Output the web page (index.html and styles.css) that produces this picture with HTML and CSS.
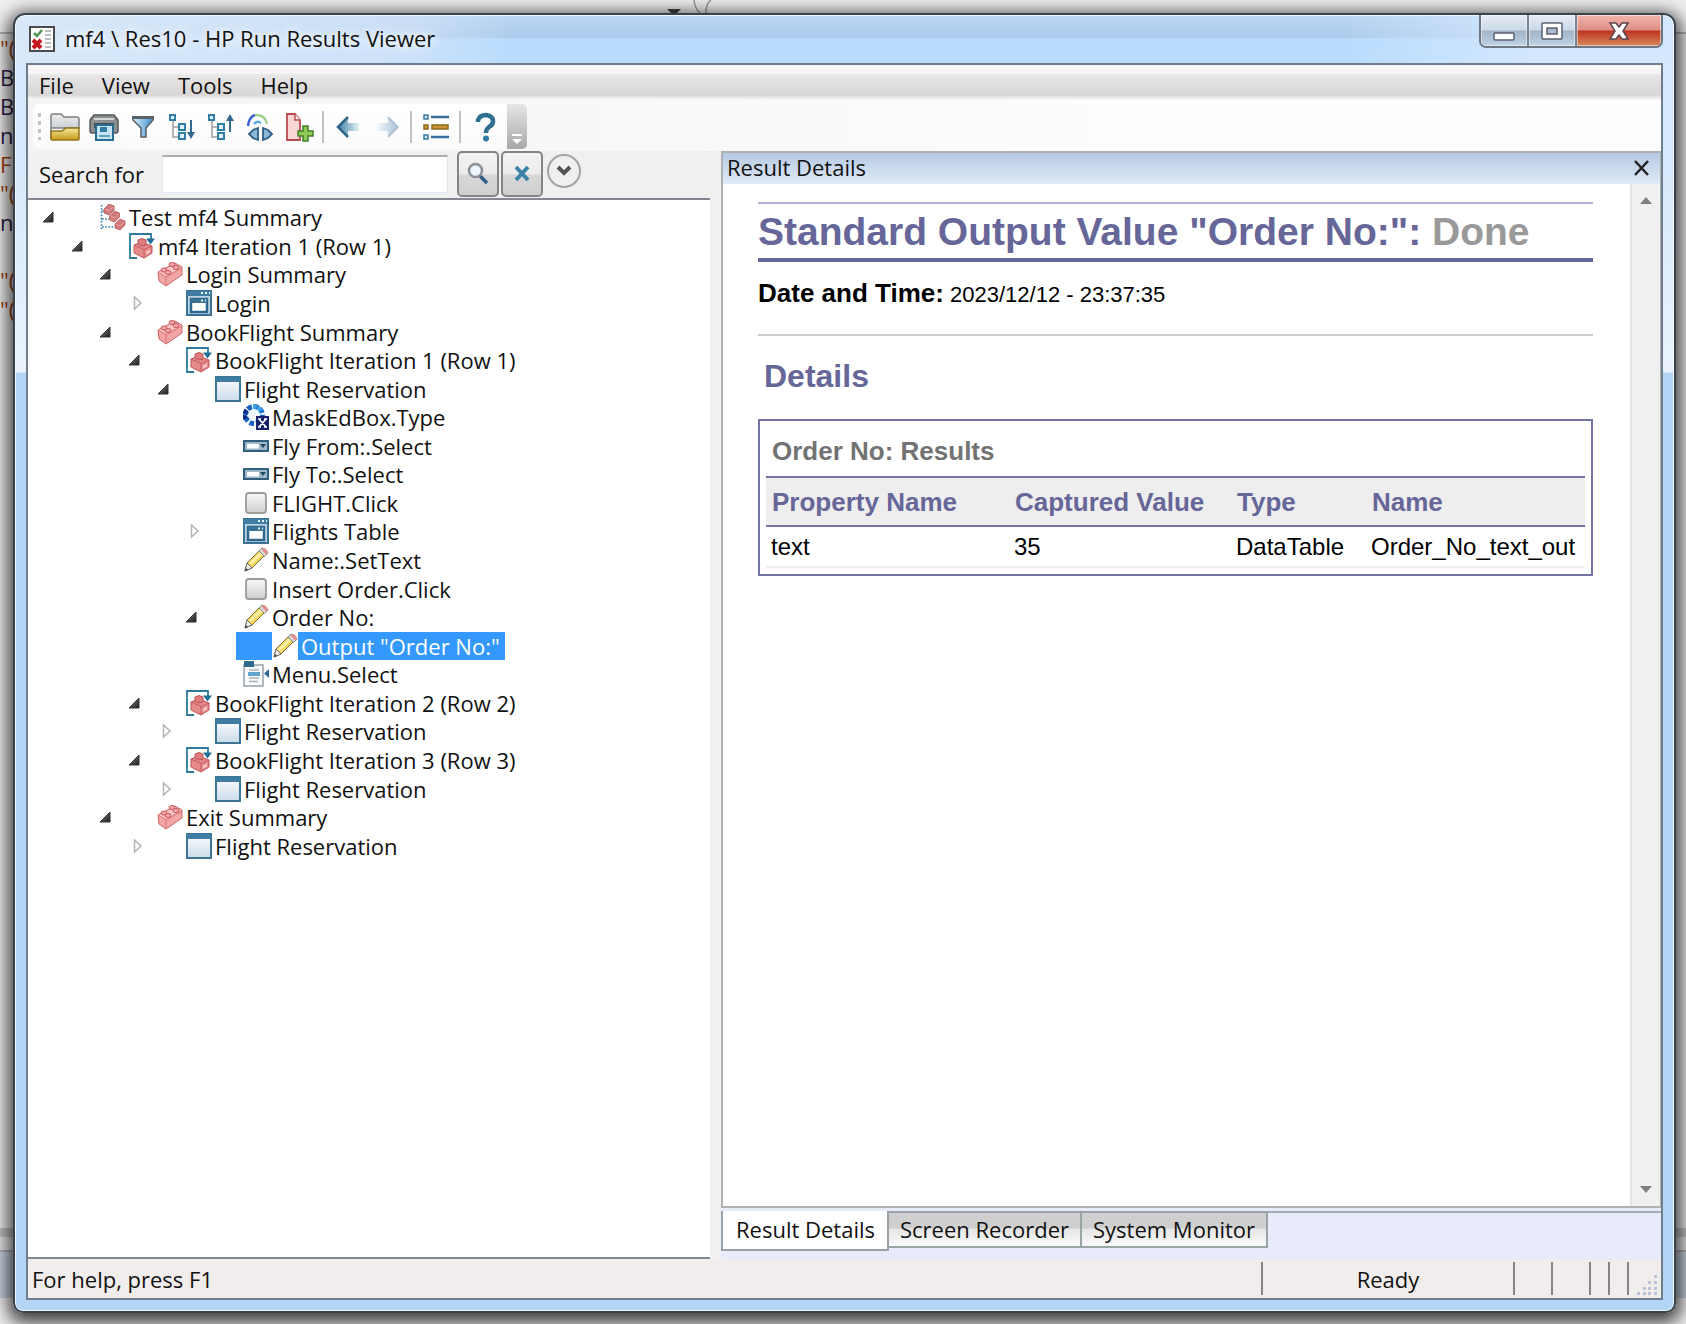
FILE: index.html
```html
<!DOCTYPE html>
<html lang="en">
<head>
<meta charset="utf-8">
<title>mf4 \ Res10 - HP Run Results Viewer</title>
<link rel="stylesheet" href="styles.css">
</head>
<body>
<svg class="defs" aria-hidden="true">
  <defs>
    <linearGradient id="g-win" x1="0" y1="0" x2="0" y2="1"><stop offset="0" stop-color="#fff"/><stop offset="1" stop-color="#c9dbe9"/></linearGradient>
    <linearGradient id="g-btn" x1="0" y1="0" x2="0" y2="1"><stop offset="0" stop-color="#f8f8f8"/><stop offset="1" stop-color="#cfcfcf"/></linearGradient>
    <linearGradient id="g-gold" x1="0" y1="0" x2="0" y2="1"><stop offset="0" stop-color="#f3e79a"/><stop offset="1" stop-color="#c79a17"/></linearGradient>
    <linearGradient id="g-paper" x1="0" y1="0" x2="0" y2="1"><stop offset="0" stop-color="#eceeef"/><stop offset="1" stop-color="#b4b8bb"/></linearGradient>
    <linearGradient id="g-back" x1="0" y1="0" x2="1" y2="0"><stop offset="0" stop-color="#3f82a8"/><stop offset="1" stop-color="#e4f0f6"/></linearGradient>
    <linearGradient id="g-fwd" x1="0" y1="0" x2="1" y2="0"><stop offset="0" stop-color="#f3f7fa"/><stop offset="1" stop-color="#a9c2d8"/></linearGradient>
    <linearGradient id="g-fun" x1="0" y1="0" x2="1" y2="0"><stop offset="0" stop-color="#d6efff"/><stop offset="1" stop-color="#3f8fce"/></linearGradient>
    <linearGradient id="g-arr" x1="0" y1="0" x2="1" y2="1"><stop offset="0" stop-color="#8a8a8a"/><stop offset="1" stop-color="#1c1c1c"/></linearGradient>
  </defs>
  <symbol id="open" viewBox="0 0 12 12"><path d="M11 1v10H1z" fill="url(#g-arr)" stroke="#333"/></symbol>
  <symbol id="closed" viewBox="0 0 12 16"><path d="M4.500 2v12l6.500-6z" fill="#fff" stroke="#b4b4b4" stroke-width="1.500"/></symbol>
  <symbol id="test" viewBox="0 0 26 26">
    <path d="M1.500 1v25M2 7h5M2 15h7M2 23h11" fill="none" stroke="#2f7fa8" stroke-width="1.600" stroke-dasharray="1.600 1.600"/>
    <g fill="#d17a7a" stroke="#b65a5e" stroke-width=".8"><path d="M4 5l5-5 5 2v4l-5 5-5-2z"/><path d="M9.500 12l5-5 5 2v4l-5 5-5-2z"/><path d="M15 20l5-5 5 2v4l-5 5-5-2z"/></g>
    <path d="M5 5l4 2 4-4M10.500 12l4 2 4-4M16 20l4 2 4-4" fill="none" stroke="#eba3a3"/>
  </symbol>
  <symbol id="brick" viewBox="0 0 26 26">
    <path d="M1 11L18 2l7 4v8L9 25l-7-5z" fill="#f3a6a6" stroke="#cf6467"/>
    <path d="M1 11l8 5 16-9M9 16v8" fill="none" stroke="#d97679"/>
    <path d="M2 11L18 3l6 3L9 15z" fill="#f9c4c4"/>
    <g fill="#f3a9a9" stroke="#c9585c"><ellipse cx="7" cy="9" rx="3" ry="2"/><ellipse cx="15" cy="3.500" rx="3" ry="2"/><ellipse cx="19" cy="6.500" rx="3" ry="2"/><ellipse cx="11" cy="11.500" rx="3" ry="2"/></g>
  </symbol>
  <symbol id="iter" viewBox="0 0 26 26">
    <path d="M8 25H1V1h21v6" fill="none" stroke="#2e7a9e" stroke-width="1.800"/>
    <path d="M5 12l8-3 10 4v7l-8 5-10-5z" fill="#e58a8a" stroke="#bf5458"/>
    <path d="M5 12l10 4.500 8-3.500M15 16.500V25" fill="none" stroke="#c65c60"/>
    <path d="M9 11V7q4-3 8 0v5q-4 2.500-8-1z" fill="#dd7b7d" stroke="#bf5458"/>
    <path d="M17 18.500l4-2v3l-4 2z" fill="#f7c6c6"/>
    <path d="M17 5.500h9l-4.500 6z" fill="#1f6f96"/>
  </symbol>
  <symbol id="win" viewBox="0 0 26 26"><path d="M1 1h24v24H1z" fill="url(#g-win)" stroke="#3e7596" stroke-width="2"/><path d="M1 1h24v5H1z" fill="#3f7ea2"/></symbol>
  <symbol id="win2" viewBox="0 0 26 26">
    <path d="M1 1h24v24H1z" fill="#bcd3e2" stroke="#3a7296" stroke-width="2"/><path d="M1 1h24v5H1z" fill="#3f7ea2"/>
    <path d="M15 3h2M19 3h2M23 3h1" stroke="#e8f3fa" stroke-width="2"/>
    <path d="M5 9h16v13H5z" fill="#fff" stroke="#2f688e" stroke-width="2.500"/><path d="M5 9h16v4H5z" fill="#3a7296"/><path d="M15 10.500h2M19 10.500h1" stroke="#e8f3fa" stroke-width="2"/>
  </symbol>
  <symbol id="mask" viewBox="0 0 26 26">
    <circle cx="11" cy="11" r="8.500" fill="#f1f8fe" stroke="#1a63c4" stroke-width="5" stroke-dasharray="4.600 2"/>
    <path d="M2.500 15A9 9 0 015 4.500" fill="none" stroke="#122c86" stroke-width="4.500" stroke-dasharray="4 1.500"/>
    <path d="M10 2.500A9 9 0 0119 9" fill="none" stroke="#37a4ea" stroke-width="4.500" stroke-dasharray="4 1.500"/>
    <path d="M13 12h13v14H13z" fill="#17226b"/><path d="M16 15l7 8M23 15l-7 8M15 15h3M21 15h3M15 23h3M21 23h3" stroke="#fff" stroke-width="1.700"/>
  </symbol>
  <symbol id="combo" viewBox="0 0 26 26"><path d="M1 8h24v10H1z" fill="#9fb8c6" stroke="#2e5f7c" stroke-width="2"/><path d="M4 11h12v4.500H4z" fill="#fff"/><path d="M17 11h6l-3 4z" fill="#1d4a66"/></symbol>
  <symbol id="btn" viewBox="0 0 26 26"><rect x="3" y="3" width="20" height="20" rx="3" fill="url(#g-btn)" stroke="#9b9b9b" stroke-width="1.800"/></symbol>
  <symbol id="pencil" viewBox="0 0 26 26">
    <path d="M2 24l2-8L17 3l5 5L9 21z" fill="#f5d75c" stroke="#7a6a3c"/>
    <path d="M7 17L19 5.500" stroke="#fdf2b0" stroke-width="2.500"/>
    <path d="M2 24l2-8 5 5z" fill="#f2eee6" stroke="#6d6d6d"/><path d="M2 24l1-3 2 2z" fill="#444"/>
    <path d="M16 4l3-3q4 0 6 5l-3.500 3.500z" fill="#d8d8d8" stroke="#8a8a8a"/><path d="M18.500 2.500q4-3 6.500 3l-2 2z" fill="#e88f90"/>
  </symbol>
  <symbol id="menu" viewBox="0 0 26 26">
    <path d="M1 4h19v21H1z" fill="#fafafa" stroke="#97a1ad" stroke-width="1.500"/><path d="M1 0h10v6H1z" fill="#2f6b8f"/>
    <path d="M6 9h10M6 17h10M6 20.500h9" stroke="#aab4bd" stroke-width="1.500"/><path d="M5 13h12" stroke="#5fa4cc" stroke-width="4"/><path d="M26 8v9l-5-4.500z" fill="#2d6a9a"/>
  </symbol>
</svg>

<div class="desktop" aria-hidden="true">
  <div class="behind-top"><svg width="60" height="14" viewBox="0 0 60 14"><path d="M0 9h14l-5 5H5z" fill="#444"/><path d="M27 0q1 9 6 13M44 0q-5 3-5 13" fill="none" stroke="#999" stroke-width="1.500"/></svg></div>
  <pre class="code"><b>"(</b>
Be
Be
n
<b>F</b>
<b>"(</b>
n

<b>"(</b>
<b>"(</b></pre>
  <div class="behind-bottom"></div>
</div>

<div class="window">
  <header class="titlebar">
    <svg class="app-icon" viewBox="0 0 26 26"><path d="M1 1h24v24H1z" fill="#fdfdfd" stroke="#4b4b4b" stroke-width="2"/><path d="M5 7l3 3 5-6" fill="none" stroke="#4f9650" stroke-width="2.500"/><path d="M4 14l8 8M12 14l-8 8" stroke="#c4161d" stroke-width="4"/><path d="M16 5h6M16 9h6M16 13h6M16 17h6M16 21h6" stroke="#a9a9a9" stroke-width="1.500"/></svg>
    <h1 class="title">mf4 \ Res10 - HP Run Results Viewer</h1>
    <div class="controls">
      <button class="ctl" aria-label="Minimize"><svg width="22" height="22" viewBox="0 0 22 22"><rect x="1" y="13" width="20" height="7" rx="1" fill="#fff" stroke="#5b5f70" stroke-width="1.500"/></svg></button>
      <button class="ctl" aria-label="Maximize"><svg width="22" height="20" viewBox="0 0 22 20"><rect x="1" y="2" width="20" height="16" rx="1" fill="#fff" stroke="#5b5f70" stroke-width="1.500"/><rect x="6" y="7" width="10" height="6" fill="#a9bdd2" stroke="#5b5f70" stroke-width="1.500"/></svg></button>
      <button class="ctl close" aria-label="Close"><svg width="22" height="20" viewBox="0 0 22 20"><path d="M2 2h6l3 4 3-4h6l-5 8 5 8h-6l-3-4-3 4H2l5-8z" fill="#fff" stroke="#5a4552" stroke-width="1.500"/></svg></button>
    </div>
  </header>

  <div class="client">
    <nav class="menubar"><button>File</button><button>View</button><button>Tools</button><button>Help</button></nav>

    <div class="toolbar-row">
      <div class="toolbar" role="toolbar">
        <span class="grip"></span>
        <button aria-label="Open"><svg viewBox="0 0 30 30"><path d="M1 27V4q0-2 2-2h8l3 3h13q2 0 2 2v9H1z" fill="url(#g-paper)" stroke="#7d8082" stroke-width="1.500"/><path d="M1 27V19h11l4-3h13v11q0 1-1 1H2q-1 0-1-1z" fill="url(#g-gold)" stroke="#93741a" stroke-width="1.500"/></svg></button>
        <button aria-label="Print"><svg viewBox="0 0 30 30"><path d="M5 3h20l4 5v11q0 2-2 2H3q-2 0-2-2V8z" fill="#8d9093" stroke="#55585a" stroke-width="1.500"/><path d="M5 7h20" stroke="#d5d7d8" stroke-width="2"/><path d="M5 11h20v5H5z" fill="#45494c"/><path d="M7 13h17v15H7z" fill="#c6e4f3" stroke="#296b90" stroke-width="2"/><path d="M11 15h7v5h-7z" fill="#2f7ca6"/><path d="M10 24h11" stroke="#5ea1c3" stroke-width="2"/></svg></button>
        <button aria-label="Filter"><svg viewBox="0 0 30 30"><path d="M5 5h20v3l-7 8v9h-5v-9L5 8z" fill="url(#g-fun)" stroke="#555c62" stroke-width="1.500"/><path d="M4 4h22v3H4z" fill="#5c6165"/></svg></button>
        <button aria-label="Expand all"><svg viewBox="0 0 30 30"><path d="M6 8v17h6M6 15h6" fill="none" stroke="#9d9d9d" stroke-width="1.500"/><path d="M3 3h5v5H3zM12 12h6v6h-6zM12 21h6v6h-6z" fill="#e3f2fa" stroke="#2f7fa8" stroke-width="2"/><path d="M24 8v17" stroke="#326a94" stroke-width="2"/><path d="M20 20h8l-4 7z" fill="#326a94"/></svg></button>
        <button aria-label="Collapse all"><svg viewBox="0 0 30 30"><path d="M6 8v17h6M6 15h6" fill="none" stroke="#9d9d9d" stroke-width="1.500"/><path d="M3 3h5v5H3zM12 12h6v6h-6zM12 21h6v6h-6z" fill="#e3f2fa" stroke="#2f7fa8" stroke-width="2"/><path d="M24 4v16" stroke="#326a94" stroke-width="2"/><path d="M20 9h8l-4-7z" fill="#326a94"/></svg></button>
        <button aria-label="Find"><svg viewBox="0 0 30 30"><path d="M3 14Q4 5 10 3" fill="none" stroke="#3c63d8" stroke-width="2.500"/><path d="M10 3q10-1 12 9" fill="none" stroke="#9ed28a" stroke-width="2.500"/><path d="M9 12q3-4 7-1" fill="none" stroke="#58a8e8" stroke-width="2.500"/><path d="M13 16v12l-5-2-4-4 4-4zM18 16v12l5-2 4-4-4-4z" fill="#8db9d8" stroke="#2c5f86" stroke-width="1.800"/></svg></button>
        <button aria-label="Add report"><svg viewBox="0 0 30 30"><path d="M3 2h8l5 6v20H3z" fill="#f8d6d6" stroke="#bb4a4e" stroke-width="1.800"/><path d="M11 2v6h5" fill="#fff" stroke="#bb4a4e" stroke-width="1.500"/><path d="M19 14h5v5h5v5h-5v5h-5v-5h-5v-5h5z" fill="#8fcb52" stroke="#3f7d28" stroke-width="1.500"/></svg></button>
        <span class="sep"></span>
        <button aria-label="Back"><svg viewBox="0 0 30 30"><path d="M5 15L15 5v6h11v8H15v6z" fill="url(#g-back)"/><path d="M15 5L5 15l10 10" fill="none" stroke="#2f668a" stroke-width="2.500"/></svg></button>
        <button aria-label="Forward"><svg viewBox="0 0 30 30"><path d="M26 15L16 5v6H5v8h11v6z" fill="url(#g-fwd)"/><path d="M16 5l10 10-10 10" fill="none" stroke="#a9bccf" stroke-width="1.500"/></svg></button>
        <span class="sep"></span>
        <button aria-label="List"><svg viewBox="0 0 30 30"><path d="M3 3h4v4H3zM3 23h4v4H3z" fill="#cfe4f0" stroke="#3b7ba4" stroke-width="1.500"/><path d="M10 5h18M10 25h18" stroke="#366f9a" stroke-width="2.500"/><path d="M3 13h4v4H3zM11 13h16v4H11z" fill="#c99a35" stroke="#8d6718" stroke-width="1.500"/></svg></button>
        <span class="sep"></span>
        <button aria-label="Help"><svg viewBox="0 0 30 30"><path d="M8 10V8q2-5 8-5 7 1 7 6 0 4-4 6-3 2-3 6" fill="none" stroke="#2e6f92" stroke-width="4.500"/><circle cx="16" cy="26.500" r="3" fill="#2e7ca3"/></svg></button>
      </div>
      <button class="overflow" aria-label="Toolbar options"><svg width="12" height="12" viewBox="0 0 12 12"><path d="M1 2h10" stroke="#fff" stroke-width="2"/><path d="M1 6h10l-5 5z" fill="#fff"/></svg></button>
    </div>

    <main class="panes">
      <section class="left">
        <form class="search">
          <label for="q">Search for</label>
          <input id="q" type="text">
          <button type="button" class="sbtn" aria-label="Search"><svg width="24" height="24" viewBox="0 0 24 24"><path d="M14 14l7 7" stroke="#2f5c8a" stroke-width="3.500"/><circle cx="9.500" cy="8.500" r="6.500" fill="#eef6fb" stroke="#8d9195" stroke-width="2.500"/></svg></button>
          <button type="button" class="sbtn" aria-label="Clear"><svg width="24" height="24" viewBox="0 0 24 24"><path d="M6 5l12 13M18 5L6 18" stroke="#3a83a6" stroke-width="4"/></svg></button>
          <button type="button" class="round" aria-label="Search options"><svg width="16" height="12" viewBox="0 0 16 12"><path d="M2 2l6 6 6-6" fill="none" stroke="#555" stroke-width="4"/></svg></button>
        </form>
        <ul class="tree" role="tree">
          <li class="l1"><svg class="ar"><use href="#open"/></svg><span class="node"><svg><use href="#test"/></svg>Test mf4 Summary</span></li>
          <li class="l2"><svg class="ar"><use href="#open"/></svg><span class="node"><svg><use href="#iter"/></svg>mf4 Iteration 1 (Row 1)</span></li>
          <li class="l3"><svg class="ar"><use href="#open"/></svg><span class="node"><svg><use href="#brick"/></svg>Login Summary</span></li>
          <li class="l4"><svg class="ar cl"><use href="#closed"/></svg><span class="node"><svg><use href="#win2"/></svg>Login</span></li>
          <li class="l3"><svg class="ar"><use href="#open"/></svg><span class="node"><svg><use href="#brick"/></svg>BookFlight Summary</span></li>
          <li class="l4"><svg class="ar"><use href="#open"/></svg><span class="node"><svg><use href="#iter"/></svg>BookFlight Iteration 1 (Row 1)</span></li>
          <li class="l5"><svg class="ar"><use href="#open"/></svg><span class="node"><svg><use href="#win"/></svg>Flight Reservation</span></li>
          <li class="l6"><svg class="ar"></svg><span class="node"><svg><use href="#mask"/></svg>MaskEdBox.Type</span></li>
          <li class="l6"><svg class="ar"></svg><span class="node"><svg><use href="#combo"/></svg>Fly From:.Select</span></li>
          <li class="l6"><svg class="ar"></svg><span class="node"><svg><use href="#combo"/></svg>Fly To:.Select</span></li>
          <li class="l6"><svg class="ar"></svg><span class="node"><svg><use href="#btn"/></svg>FLIGHT.Click</span></li>
          <li class="l6"><svg class="ar cl"><use href="#closed"/></svg><span class="node"><svg><use href="#win2"/></svg>Flights Table</span></li>
          <li class="l6"><svg class="ar"></svg><span class="node"><svg><use href="#pencil"/></svg>Name:.SetText</span></li>
          <li class="l6"><svg class="ar"></svg><span class="node"><svg><use href="#btn"/></svg>Insert Order.Click</span></li>
          <li class="l6"><svg class="ar"><use href="#open"/></svg><span class="node"><svg><use href="#pencil"/></svg>Order No:</span></li>
          <li class="l7"><svg class="ar"></svg><span class="node selected"><svg><use href="#pencil"/></svg>Output "Order No:"</span></li>
          <li class="l6"><svg class="ar"></svg><span class="node"><svg><use href="#menu"/></svg>Menu.Select</span></li>
          <li class="l4"><svg class="ar"><use href="#open"/></svg><span class="node"><svg><use href="#iter"/></svg>BookFlight Iteration 2 (Row 2)</span></li>
          <li class="l5"><svg class="ar cl"><use href="#closed"/></svg><span class="node"><svg><use href="#win"/></svg>Flight Reservation</span></li>
          <li class="l4"><svg class="ar"><use href="#open"/></svg><span class="node"><svg><use href="#iter"/></svg>BookFlight Iteration 3 (Row 3)</span></li>
          <li class="l5"><svg class="ar cl"><use href="#closed"/></svg><span class="node"><svg><use href="#win"/></svg>Flight Reservation</span></li>
          <li class="l3"><svg class="ar"><use href="#open"/></svg><span class="node"><svg><use href="#brick"/></svg>Exit Summary</span></li>
          <li class="l4"><svg class="ar cl"><use href="#closed"/></svg><span class="node"><svg><use href="#win"/></svg>Flight Reservation</span></li>
        </ul>
      </section>

      <section class="right">
        <div class="details">
          <div class="pane-head"><span>Result Details</span><button aria-label="Close pane"><svg width="18" height="18" viewBox="0 0 18 18"><path d="M2 2l13 14M15 2L2 16" stroke="#222" stroke-width="2.500"/></svg></button></div>
          <div class="pane-body">
            <article class="report">
              <h2>Standard Output Value "Order No:": <span>Done</span></h2>
              <p class="date"><strong>Date and Time:</strong> 2023/12/12 - 23:37:35</p>
              <h3>Details</h3>
              <div class="box">
                <table>
                  <caption>Order No: Results</caption>
                  <colgroup><col class="c1"><col class="c2"><col class="c3"><col></colgroup>
                  <thead><tr><th>Property Name</th><th>Captured Value</th><th>Type</th><th>Name</th></tr></thead>
                  <tbody><tr><td>text</td><td>35</td><td>DataTable</td><td>Order_No_text_out</td></tr></tbody>
                </table>
              </div>
            </article>
            <div class="scroll" aria-hidden="true"><svg width="14" height="8" viewBox="0 0 14 8"><path d="M1 8l6-7 6 7z" fill="#808080"/></svg><svg width="14" height="8" viewBox="0 0 14 8"><path d="M1 0l6 7 6-7z" fill="#808080"/></svg></div>
          </div>
        </div>
        <div class="tabs" role="tablist">
          <button role="tab" class="active" aria-selected="true">Result Details</button><button role="tab">Screen Recorder</button><button role="tab">System Monitor</button>
        </div>
      </section>
    </main>

    <footer class="status">
      <span class="help">For help, press F1</span><span class="cell ready">Ready</span><span class="cell wide"></span><span class="cell wide"></span><span class="cell slim"></span><span class="cell slim"></span>
      <span class="cell end"><svg width="20" height="20" viewBox="0 0 20 20"><path d="M17 0h3v3h-3zM11 6h3v3h-3zM17 6h3v3h-3zM6 12h3v3H6zM11 12h3v3h-3zM17 12h3v3h-3zM0 17h3v3H0zM6 17h3v3H6zM11 17h3v3h-3zM17 17h3v3h-3z" fill="#bcc3d6"/></svg></span>
    </footer>
  </div>
</div>
</body>
</html>
```
FILE: styles.css
```css
* { box-sizing: border-box; }

body {
  display: flex;
  min-height: 100vh;
  margin: 0;
  padding: 13px 10px 11px 13px;
  background: #e4e4e4;
  font: 22px/28px "Open Sans", "Noto Sans", sans-serif;
  color: #111;
  overflow: hidden;
}

button {
  margin: 0;
  padding: 0;
  border: 0;
  background: none;
  font: inherit;
  color: inherit;
}

svg { display: block; flex: none; }
.defs { position: absolute; width: 0; height: 0; }

/* Whatever lies behind the window */
.desktop {
  position: absolute;
  inset: 0;
  display: flex;
  flex-direction: column;
  background: #ededed;
}
.behind-top {
  flex: none;
  height: 34px;
  padding-left: 667px;
  border-bottom: 2px solid #b4b4b4;
  background: #f0f0f0;
}
.code {
  flex: 1;
  margin: 0;
  font: inherit;
  line-height: 29px;
  color: #2a1745;
}
.code b { font-weight: 400; color: #a33c0c; }
.behind-bottom {
  flex: none;
  height: 96px;
  background: linear-gradient(#c4c4c4 0 9px, #e6e6e6 9px 22px, #b0b4b8 22px 24px, #c9d2de 24px 70px, #f0f0f0 70px);
}

.window {
  position: relative;
  flex: 1;
  display: flex;
  flex-direction: column;
  min-width: 0;
  padding: 0 11px 11px;
  border: 2px solid #3a424b;
  border-radius: 12px 12px 10px 10px;
  background:
    linear-gradient(90deg, rgba(220, 234, 250, .9) 0, rgba(210, 228, 248, .7) 24%, rgba(190, 220, 250, 0) 30%, rgba(190, 220, 250, 0) 80%, rgba(214, 233, 254, .9) 92%) 0 0 / 100% 50px no-repeat,
    linear-gradient(#bad6f4, #adcbea 22px, #b8dcff 24px, #bbdcfb 50px) 0 0 / 100% 50px no-repeat,
    linear-gradient(#d6e8fc 0 140px, #eaf3fc 357px, #b4d6f6 358px);
  box-shadow: inset 0 0 0 1px #f0f7ff, 0 5px 18px 5px rgba(0, 0, 0, .75);
}

.titlebar {
  display: flex;
  flex: none;
  height: 48px;
  padding-left: 3px;
}
.app-icon { width: 26px; height: 26px; margin-top: 11px; }
.title {
  flex: 1;
  margin: 8px 0 0 10px;
  font-size: 22px;
  font-weight: 400;
  line-height: 30px;
  text-shadow: 0 0 8px #fff, 0 0 12px #fff;
}
.controls {
  display: flex;
  height: 33px;
  border: solid #6d7884;
  border-width: 0 2px 2px;
  border-radius: 0 0 7px 7px;
  overflow: hidden;
}
.ctl {
  display: grid;
  place-items: center;
  width: 48px;
  border-right: 2px solid #76828f;
  background: linear-gradient(#e6eef7, #cbd8e6 15px, #a2b4c7 16px, #c0d3e6);
  box-shadow: inset 0 0 0 1px rgba(255, 255, 255, .5);
}
.ctl.close {
  width: 84px;
  border-right: 0;
  background: linear-gradient(#f2b5aa, #dd8e84 15px, #bd3420 16px, #d98a5c);
}

.client {
  flex: 1;
  display: flex;
  flex-direction: column;
  min-height: 0;
  border: 2px solid #6f7d8d;
  background: #f0f0f0;
}

.menubar {
  display: flex;
  flex: none;
  gap: 28px;
  height: 35px;
  padding: 4px 0 0 11px;
  background: linear-gradient(#f6f6f6 0 8px, #e8e6e6 10px, #d9d7d5 30px, #fafafa 35px);
}

.toolbar-row {
  display: flex;
  flex: none;
  height: 51px;
  padding: 4px 0 2px 5px;
  background: linear-gradient(90deg, #f3f3f3, #fdfdfd 70%);
}
.toolbar {
  display: flex;
  align-items: center;
  width: 474px;
  border-radius: 6px 0 0 6px;
  background: linear-gradient(#fff, #fbfbfb);
}
.toolbar button { display: grid; place-items: center; width: 39px; height: 40px; }
.toolbar button svg { width: 30px; height: 30px; }
.grip {
  width: 3px;
  height: 27px;
  margin: 0 4px 0 5px;
  background: repeating-linear-gradient(#c3c3c3 0 4px, transparent 4px 8px);
}
.sep { width: 2px; height: 32px; margin: 0 4px; background: #c2c2c2; }
.overflow {
  display: flex;
  align-items: flex-end;
  justify-content: center;
  width: 20px;
  padding-bottom: 4px;
  border-radius: 0 5px 5px 0;
  background: linear-gradient(#e6e6e6, #a8a8a8);
}

.panes {
  flex: 1;
  display: grid;
  grid-template-columns: minmax(0, 682fr) minmax(0, 940fr);
  column-gap: 11px;
  min-height: 0;
}

.left { display: flex; flex-direction: column; }
.search {
  display: flex;
  flex: none;
  gap: 2px;
  height: 47px;
}
.search label { width: 132px; padding: 9px 0 0 11px; }
.search input {
  width: 286px;
  height: 38px;
  margin: 4px 7px 0 0;
  border: 1px solid #e3e9ef;
  border-top: 2px solid #abadb3;
  background: #fff;
  font: inherit;
}
.sbtn {
  display: grid;
  place-items: center;
  width: 42px;
  height: 46px;
  border: 2px solid #858585;
  border-radius: 5px;
  background: linear-gradient(#f4f4f4, #ebebeb 50%, #d8d8d8 52%, #cfcfcf);
}
.round {
  display: grid;
  place-items: center;
  width: 34px;
  height: 34px;
  margin: 3px 0 0 2px;
  border: 2px solid #a3a3a3;
  border-radius: 50%;
}

.tree {
  flex: 1;
  display: grid;
  grid-template-rows: repeat(23, 1fr);
  margin: 0;
  padding: 3px 0 397px 14px;
  border-top: 2px solid #828790;
  border-bottom: 2px solid #828790;
  background: #fff;
  list-style: none;
}
.tree li { display: flex; align-items: center; min-height: 0; white-space: nowrap; }
.l2 { padding-left: 29px; }
.l3 { padding-left: 57px; }
.l4 { padding-left: 86px; }
.l5 { padding-left: 115px; }
.l6 { padding-left: 143px; }
.l7 { padding-left: 172px; }
.ar { width: 12px; height: 12px; margin-right: 46px; }
.ar.cl { width: 16px; height: 16px; margin-right: 42px; }
.node { display: flex; align-items: center; gap: 3px; height: 28px; }
.node svg { width: 26px; height: 26px; }
.selected { margin-left: -36px; padding: 0 5px 0 36px; background: #3399ff; color: #fff; }
.selected svg { height: 28px; background: #fff; }

.right { display: flex; flex-direction: column; min-width: 0; }
.details {
  flex: 1;
  display: flex;
  flex-direction: column;
  border: 2px solid #aeb2b2;
  border-right-width: 1px;
  background: #fff;
}
.pane-head {
  display: flex;
  flex: none;
  justify-content: space-between;
  height: 31px;
  padding: 0 9px 1px 4px;
  background: linear-gradient(#b6c9e2, #e0eaf8);
}
.pane-body { flex: 1; display: flex; }
.report {
  flex: 1;
  padding: 18px 37px 0 35px;
  font-family: "Liberation Sans", Arial, sans-serif;
  color: #000;
}
.report h2 {
  margin: 0;
  padding: 6px 0 4px;
  border-top: 2px solid #b1b1dc;
  border-bottom: 4px solid #666699;
  font-size: 39px;
  line-height: 44px;
  color: #666699;
  white-space: nowrap;
}
.report h2 span { color: #999; }
.date {
  margin: 0;
  padding: 16px 0 24px;
  border-bottom: 2px solid #ccc;
  line-height: 30px;
}
.date strong { font-size: 26px; }
.report h3 {
  margin: 0;
  padding: 22px 0 25px 6px;
  font-size: 32px;
  line-height: 36px;
  color: #666699;
}
.box { padding: 6px; border: 2px solid #7474a4; }
.box table {
  width: 100%;
  table-layout: fixed;
  border-collapse: collapse;
  text-align: left;
}
.box caption {
  padding: 9px 6px 10px;
  font-size: 26px;
  font-weight: 700;
  line-height: 30px;
  text-align: left;
  color: #737373;
}
.c1 { width: 243px; }
.c2 { width: 222px; }
.c3 { width: 135px; }
.box th {
  height: 49px;
  padding: 0 6px;
  border: solid #7474a4;
  border-width: 2px 0;
  background: #eee;
  font-size: 26px;
  color: #666699;
}
.box td {
  height: 41px;
  padding: 0 5px;
  border-bottom: 2px solid #f0f0f0;
  font-size: 24px;
}
.scroll {
  display: flex;
  flex-direction: column;
  align-items: center;
  justify-content: space-between;
  width: 30px;
  padding: 12px 0;
  border-left: 2px solid #e4e4e4;
  background: #f0f0f0;
}

.tabs {
  display: flex;
  flex: none;
  align-items: flex-start;
  height: 51px;
  padding-top: 3px;
  background: linear-gradient(#e8ecfa 0 3px, #a6b0b4 3px 5px, #e8ecfa 5px);
}
.tabs button {
  height: 37px;
  padding: 0 11px;
  border: 2px solid #98a4a6;
  border-left: 0;
  background: linear-gradient(#cfcfcf 0 45%, #e6e6e6 50%, #fafafa);
  line-height: 33px;
}
.tabs .active {
  height: 40px;
  padding: 0 12px 2px 13px;
  border: 2px solid #98a0a8;
  border-top: 0;
  background: #fff;
  line-height: 36px;
}

.status {
  display: flex;
  flex: none;
  height: 39px;
  padding: 3px 4px;
  background: #f0edec;
}
.status .help { flex: 1; line-height: 34px; }
.cell { border-left: 2px solid #858585; line-height: 34px; text-align: center; }
.ready { width: 252px; }
.wide { width: 38px; }
.slim { width: 19px; }
.end { display: flex; align-items: flex-end; justify-content: flex-end; width: 30px; }
```
